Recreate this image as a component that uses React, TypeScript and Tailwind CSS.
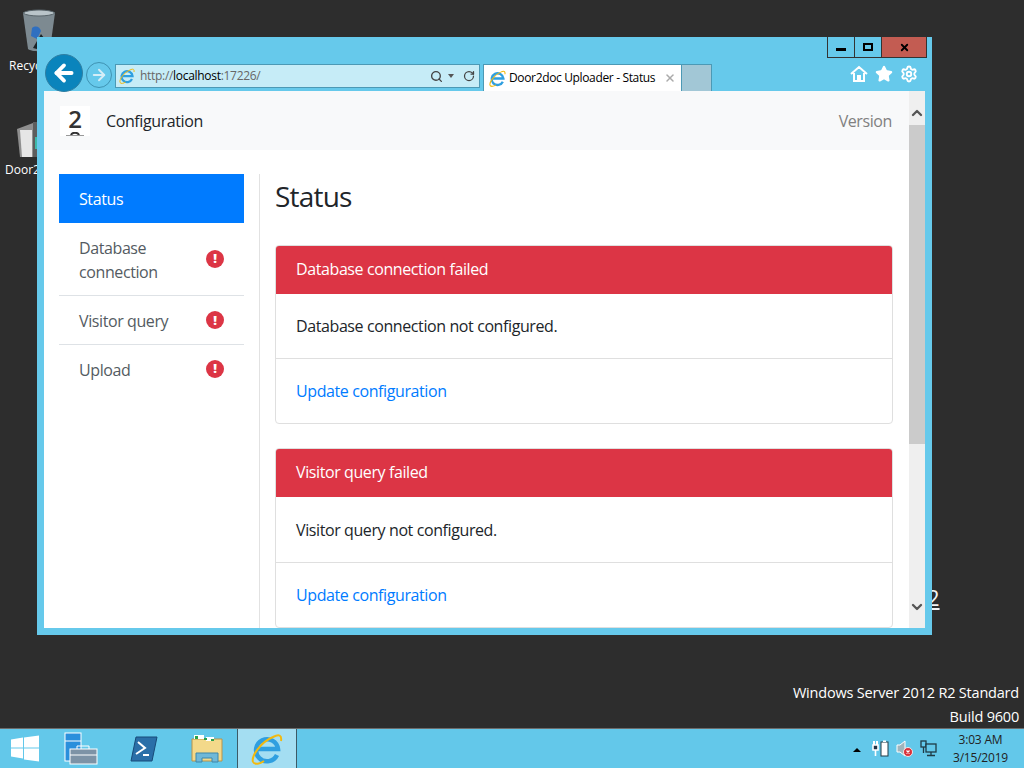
import { Star, Settings, Search, RotateCw, ChevronDown, ChevronUp, X, ArrowLeft, ArrowRight } from "lucide-react";

function IeIcon({ size = 18 }: { size?: number }) {
  return (
    <svg width={size} height={size} viewBox="0 0 32 32" fill="none">
      <path d="M26 22A11 11 0 1 1 27 16H7" stroke="#2f9fe0" strokeWidth="4.5" />
      <path d="M2 29C0 23 10 9 22 4c6-3 9-2 8 4" stroke="#f2b90f" strokeWidth="2" />
      <path d="M2 29c2 3 7 2 11-1" stroke="#f2b90f" strokeWidth="2" />
    </svg>
  );
}

function AlertDot({ className = "" }: { className?: string }) {
  return (
    <span className={`w-[18px] h-[18px] rounded-full bg-[#dc3545] flex items-center justify-center text-white text-[13px] font-extrabold leading-none shrink-0 ${className}`}>
      !
    </span>
  );
}

function StatusCard({ title, message }: { title: string; message: string }) {
  return (
    <div className="border border-[#dfdfdf] rounded-[4px] overflow-hidden shrink-0 bg-white text-[16px]">
      <div className="h-[48px] bg-[#dc3545] text-white flex items-center px-5 pb-[2px]">{title}</div>
      <div className="h-[65.4px] border-b border-[#dfdfdf] flex items-center px-5 text-[#212529]">{message}</div>
      <div className="h-[64px] flex items-center px-5 text-[#007bff]">Update configuration</div>
    </div>
  );
}

export default function App() {
  return (
    <div className="relative w-[1024px] h-[768px] overflow-hidden bg-[#2d2d2d] flex flex-col font-['Open_Sans','Noto_Sans',sans-serif]">
      {/* Desktop */}
      <div className="flex-1 relative">
        {/* Recycle bin */}
        <div className="absolute left-[9px] top-[8px] flex flex-col items-start text-white text-[12px]">
          <svg width="38" height="46" viewBox="0 0 36 46" className="ml-[11px]">
            <path d="M2 5l5 36c3 3 19 3 22 0l5-36z" fill="#7d8a91" />
            <path d="M2 5c4-4 28-4 32 0-4 4-28 4-32 0z" fill="#b9c4c9" stroke="#59656b" />
            <path d="M11 20c4-3 8-1 9 3l-4 8-6-3z" fill="#2f6fc0" />
            <path d="M12 40l8-14 3 4-7 11z" fill="#1c2327" />
          </svg>
          <span className="mt-[4px] leading-4 whitespace-nowrap">Recycle Bin</span>
        </div>
        {/* Door2doc */}
        <div className="absolute left-[5px] top-[113px] flex flex-col items-start text-white text-[12px]">
          <svg width="34" height="46" viewBox="0 0 34 46" className="ml-[10px]">
            <path d="M2 16l16-6v34H5z" fill="#8f8f8f" />
            <path d="M5 17h12v27H7z" fill="#e6e6e6" />
            <path d="M18 9h11v35H18z" fill="#5d5d5d" />
            <path d="M24 0h3v40h-3z" fill="#444" />
            <path d="M20 24h8v12h-8z" fill="#3fb8a8" />
          </svg>
          <span className="mt-[3px] leading-4 whitespace-nowrap">Door2doc Up</span>
        </div>
        <div className="absolute left-[927px] top-[581px] text-[#f4f4f4] text-[22px] leading-8 underline">2</div>
        {/* Watermark */}
        <div className="absolute right-[5px] bottom-[-1px] text-right text-white text-[14.5px] leading-[24px] tracking-[-0.2px]">
          <div>Windows Server 2012 R2 Standard</div>
          <div>Build 9600</div>
        </div>

        {/* Browser window */}
        <div className="absolute left-[37px] top-[37px] w-[895px] h-[598px] bg-[#66c9eb] flex flex-col px-[7px] pb-[7px]">
          {/* Caption buttons */}
          <div className="absolute left-[790px] top-0 h-[21px] flex border border-t-0 border-[#333] text-black">
            <div className="w-[27px] border-r border-[#333] flex items-end justify-center pb-[6px]">
              <div className="w-[10px] h-[3px] bg-black" />
            </div>
            <div className="w-[27px] border-r border-[#333] flex items-center justify-center">
              <div className="w-[10px] h-[8px] border-2 border-black" />
            </div>
            <div className="w-[44px] bg-[#c35c52] flex items-center justify-center">
              <X size={11} strokeWidth={4} />
            </div>
          </div>

          {/* Toolbar */}
          <div className="h-[54px] flex items-end shrink-0 relative">
            <div className="w-[38px] h-[38px] rounded-full bg-[#0a84bc] border border-[#2f7fa3] flex items-center justify-center mb-[-1px] ml-px z-10">
              <ArrowLeft size={26} strokeWidth={3.5} className="text-white" />
            </div>
            <div className="w-[26px] h-[26px] rounded-full border border-[#3f93b3] flex items-center justify-center ml-[3px] mb-[3px]">
              <ArrowRight size={18} strokeWidth={2.5} className="text-[#d5eef7]" />
            </div>
            <div className="w-[365px] h-[24px] ml-[3px] mb-[3px] bg-[#c6ecf7] border border-[#4c99b5] flex items-center pl-[3px] pr-[4px] text-[12px]">
              <IeIcon size={16} />
              <span className="ml-[5px] text-[#666] tracking-[-0.3px]">
                http://<span className="text-black">localhost</span>:17226/
              </span>
              <div className="ml-auto flex items-center text-[#444] gap-[5px]">
                <Search size={13} strokeWidth={2.5} />
                <span className="w-0 h-0 border-x-[3px] border-x-transparent border-t-[4px] border-t-[#555]" />
                <RotateCw size={12} strokeWidth={2.5} className="ml-[4px]" />
              </div>
            </div>
            <div className="w-[199px] h-[27px] ml-[3px] bg-white border border-b-0 border-[#4c99b5] flex items-center pl-[5px] pr-[5px] text-[12px] text-black">
              <IeIcon size={17} />
              <span className="ml-[3px] whitespace-nowrap tracking-[-0.35px]">Door2doc Uploader - Status</span>
              <X size={12} strokeWidth={3} className="ml-auto text-[#aaa]" />
            </div>
            <div className="w-[30px] h-[27px] bg-[#a2c7d6] border border-l-0 border-b-0 border-[#4c99b5]" />
            <div className="ml-auto flex items-center gap-[7px] mb-[8px] mr-[7px] text-white">
              <svg width="18" height="18" viewBox="0 0 18 18" fill="none" stroke="white" strokeWidth="2">
                <path d="M1 9l8-7 8 7M4 8v8h4v-5h2v5h4V8" />
              </svg>
              <Star size={18} fill="white" />
              <Settings size={18} strokeWidth={2.5} />
            </div>
          </div>

          {/* Page */}
          <div className="flex-1 flex min-h-0 bg-white">
            <div className="flex-1 min-w-0 overflow-hidden flex flex-col tracking-[-0.4px]">
              <nav className="h-[59px] shrink-0 bg-[#f8f9fa] flex items-center pl-[16px] pr-[17px] text-[16px]">
                <div className="w-[30px] h-[30px] bg-white flex flex-col items-center relative">
                  <span className="text-[#333] text-[24px] font-semibold leading-[26px]">2</span>
                  <svg width="18" height="4" viewBox="0 0 18 4" className="absolute bottom-0 left-[6px]">
                    <path d="M5 3c1-3 7-3 8 0" fill="none" stroke="#333" strokeWidth="2" />
                    <path d="M0 3.5h18" stroke="#999" />
                  </svg>
                </div>
                <span className="ml-4 text-[#212529]">Configuration</span>
                <span className="ml-auto text-[#808080]">Version</span>
              </nav>
              <div className="flex flex-1 min-h-0 pt-6 pl-[15px] pr-[16px] text-[16px]">
                {/* Sidebar */}
                <div className="w-[201px] pr-[15px] border-r border-[#e2e2e2] shrink-0">
                  <div className="h-[49px] bg-[#007bff] text-white flex items-center px-5">Status</div>
                  <div className="mt-px h-[72px] border-b border-[#dee2e6] flex items-center pl-5 pr-5 text-[#545b62] leading-6">
                    <span className="flex-1">Database connection</span>
                    <AlertDot className="-mt-[2px]" />
                  </div>
                  <div className="h-[49px] border-b border-[#dee2e6] flex items-center pl-5 pr-5 text-[#545b62]">
                    <span className="flex-1 pt-[2px]">Visitor query</span>
                    <AlertDot />
                  </div>
                  <div className="h-[49px] flex items-center pl-5 pr-5 text-[#545b62]">
                    <span className="flex-1">Upload</span>
                    <AlertDot className="-mt-[2px]" />
                  </div>
                </div>
                {/* Main */}
                <div className="flex-1 min-w-0 pl-[15px] flex flex-col">
                  <h1 className="text-[28px] leading-[44px] text-[#212529] mb-[27px] shrink-0 tracking-[-0.8px]">Status</h1>
                  <StatusCard title="Database connection failed" message="Database connection not configured." />
                  <div className="h-6 shrink-0" />
                  <StatusCard title="Visitor query failed" message="Visitor query not configured." />
                </div>
              </div>
            </div>
            {/* Scrollbar */}
            <div className="w-4 shrink-0 bg-[#efefef] flex flex-col">
              <div className="h-[34px] flex items-start pt-[14px] justify-center text-[#555]">
                <ChevronUp size={16} strokeWidth={3.5} />
              </div>
              <div className="h-[319px] bg-[#cbcbcb]" />
              <div className="flex-1 flex items-end justify-center pb-[13px] text-[#555]">
                <ChevronDown size={16} strokeWidth={3.5} />
              </div>
            </div>
          </div>
        </div>
      </div>

      {/* Taskbar */}
      <div className="h-10 shrink-0 bg-[#63c8ea] border-t border-[#6c6c6c] flex items-stretch relative">
        <div className="w-[50px] flex items-center justify-center">
          <svg width="28" height="27" viewBox="0 0 28 26" fill="white">
            <path d="M0 4l12-2v10H0zM13 2l15-2v12H13zM0 13h12v10L0 21zM13 13h15v13l-15-2z" />
          </svg>
        </div>
        <div className="w-[62px] flex items-center justify-center">
          <svg width="34" height="34" viewBox="0 0 34 34">
            <rect x="1" y="1" width="16" height="28" fill="#2a8fdc" stroke="#fff" />
            <path d="M1 9h16" stroke="#fff" />
            <rect x="6" y="17" width="27" height="15" fill="#7d93a6" stroke="#fff" />
            <path d="M13 17v-3h12v3M6 23h27" fill="none" stroke="#fff" />
          </svg>
        </div>
        <div className="w-[64px] flex items-center justify-center">
          <svg width="28" height="26" viewBox="0 0 28 26">
            <path d="M6 1h21l-5 24H1z" fill="#2a6fa8" stroke="#174a78" />
            <path d="M8 6l7 6-9 6" fill="none" stroke="#fff" strokeWidth="2" />
            <path d="M13 19h6" stroke="#fff" strokeWidth="2" />
          </svg>
        </div>
        <div className="w-[61px] flex items-center justify-center">
          <svg width="32" height="32" viewBox="0 0 32 32">
            <path d="M1 6h30v22H1z" fill="#f3d98a" stroke="#b8934a" />
            <path d="M3 2h10v4H3zM15 4h8v4h-8z" fill="#fff" />
            <path d="M4 3h3v3H4zM13 5h3v2h-3zM20 6h3v2h-3z" fill="#2ba14a" />
            <path d="M5 29V20h22v9h-6v-4H11v4z" fill="#6fb8d8" stroke="#3d87ab" />
          </svg>
        </div>
        <div className="w-[60px] bg-[#a4def2] border-x border-[#3c5a66] flex items-center justify-center">
          <IeIcon size={32} />
        </div>

        {/* Tray */}
        <div className="absolute left-[853px] top-[19px] w-0 h-0 border-x-[4px] border-x-transparent border-b-[4px] border-b-black" />
        <div className="ml-auto flex items-center pr-[16px]">
          <svg width="17" height="17" viewBox="0 0 17 17" fill="none" className="mr-[7px]">
            <path d="M2 1v4M5 1v4" stroke="#fff" strokeWidth="2" />
            <path d="M1 5h5v5H1zM3.5 10v6" stroke="#fff" strokeWidth="1.6" fill="#234" />
            <rect x="9" y="2" width="7" height="14" stroke="#1f3b46" fill="#fff" />
            <rect x="11" y="0.5" width="3" height="1.5" fill="#fff" />
          </svg>
          <svg width="17" height="17" viewBox="0 0 17 17" className="mr-[7px]">
            <path d="M1 5h3l5-4v15l-5-4H1z" fill="#9fb4bc" stroke="#fff" />
            <circle cx="12" cy="12" r="4.5" fill="#d9313a" stroke="#fff" strokeWidth=".8" />
            <path d="M10.5 10.5l3 3M13.5 10.5l-3 3" stroke="#fff" strokeWidth="1.2" />
          </svg>
          <svg width="17" height="17" viewBox="0 0 17 17" fill="none" stroke="#fff" strokeWidth="1.3" className="mr-[16px]">
            <rect x="1" y="1" width="5" height="6" stroke="#1f3b46" />
            <path d="M3.5 7v6" stroke="#1f3b46" />
            <rect x="6" y="4" width="10" height="8" fill="#63c8ea" stroke="#1f3b46" />
            <path d="M11 12v3M7 15.5h8" stroke="#1f3b46" />
          </svg>
          <div className="text-center text-[12px] leading-[18px] text-[#222] tracking-[-0.2px]">
            <div>3:03 AM</div>
            <div>3/15/2019</div>
          </div>
        </div>
      </div>
    </div>
  );
}
